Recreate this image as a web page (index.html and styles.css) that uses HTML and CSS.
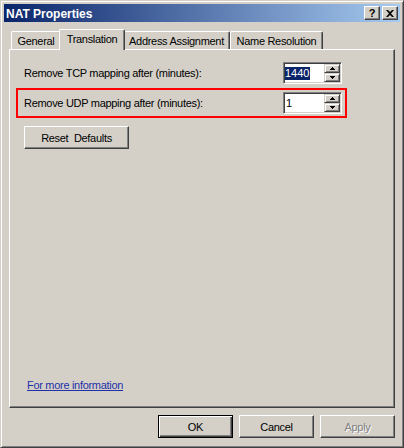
FILE: index.html
```html
<!DOCTYPE html>
<html>
<head>
<meta charset="utf-8">
<link rel="stylesheet" href="styles.css">
</head>
<body>
<div class="window">
  <div class="titlebar">
    <span class="title">NAT Properties</span>
    <div class="tb-buttons">
      <span class="tb-btn">?</span>
      <span class="tb-btn"><svg width="8" height="7" viewBox="0 0 8 7"><path d="M0 0h2l2 2 2-2h2L5 3.5 8 7H6L4 5 2 7H0l3-3.5z" fill="#000"/></svg></span>
    </div>
  </div>
  <div class="body">
    <div class="tabs">
      <div class="tab t-general">General</div>
      <div class="tab t-trans active">Translation</div>
      <div class="tab t-addr">Address Assignment</div>
      <div class="tab t-name">Name Resolution</div>
    </div>
    <div class="panel">
      <div class="row first">
        <span class="label">Remove TCP mapping after (minutes):</span>
        <div class="spin">
          <div class="field"><span class="sel">1440</span></div>
          <div class="spin-btns">
            <span class="sb"><svg width="5" height="3" viewBox="0 0 5 3"><path d="M2 0h1v1h1v1h1v1H0V2h1V1h1z" fill="#000"/></svg></span>
            <span class="sb"><svg width="5" height="3" viewBox="0 0 5 3"><path d="M0 0h5v1H4v1H3v1H2V2H1V1H0z" fill="#000"/></svg></span>
          </div>
        </div>
      </div>
      <div class="udp-box">
        <div class="row">
          <span class="label">Remove UDP mapping after (minutes):</span>
          <div class="spin">
            <div class="field"><span class="val">1</span></div>
            <div class="spin-btns">
              <span class="sb"><svg width="5" height="3" viewBox="0 0 5 3"><path d="M2 0h1v1h1v1h1v1H0V2h1V1h1z" fill="#000"/></svg></span>
              <span class="sb"><svg width="5" height="3" viewBox="0 0 5 3"><path d="M0 0h5v1H4v1H3v1H2V2H1V1H0z" fill="#000"/></svg></span>
            </div>
          </div>
        </div>
      </div>
      <button class="btn reset">Reset&nbsp;&nbsp;Defaults</button>
      <a class="more">For more information</a>
    </div>
    <div class="actions">
      <button class="btn default">OK</button>
      <button class="btn">Cancel</button>
      <button class="btn disabled">Apply</button>
    </div>
  </div>
</div>
</body>
</html>
```

FILE: styles.css
```css
html, body {
  margin: 0;
  padding: 0;
  background: #D4D0C8;
}
body {
  font-family: "Liberation Sans", Arial, sans-serif;
  font-size: 11px;
  letter-spacing: -0.3px;
  color: #000;
}
.window {
  width: 404px;
  height: 448px;
  box-sizing: border-box;
  border: 1px solid;
  border-color: #D4D0C8 #404040 #404040 #D4D0C8;
  box-shadow: inset 1px 1px #fff, inset -1px -1px #808080;
  padding: 3px;
  display: flex;
  flex-direction: column;
  background: #D4D0C8;
}
.titlebar {
  height: 18px;
  flex: none;
  background: linear-gradient(to right, #0A246A, #A6CAF0);
  display: flex;
  align-items: center;
  justify-content: space-between;
  padding: 0 2px 0 2px;
}
.title {
  color: #fff;
  font-weight: bold;
  font-size: 12px;
  letter-spacing: 0;
  padding-top: 1px;
}
.tb-buttons {
  display: flex;
  gap: 2px;
}
.tb-btn {
  width: 16px;
  height: 14px;
  box-sizing: border-box;
  background: #D4D0C8;
  border: 1px solid;
  border-color: #fff #404040 #404040 #fff;
  box-shadow: inset -1px -1px #808080;
  display: flex;
  align-items: center;
  justify-content: center;
  font-weight: bold;
  font-size: 11px;
  letter-spacing: 0;
  line-height: 1;
}
.body {
  flex: 1;
  display: flex;
  flex-direction: column;
  padding: 7px 5px 0;
  min-height: 0;
}
.tabs {
  display: flex;
  align-items: flex-end;
  height: 20px;
  flex: none;
  padding-left: 2px;
  position: relative;
  z-index: 1;
}
.tab {
  height: 18px;
  box-sizing: border-box;
  border-top: 1px solid #fff;
  border-left: 1px solid #fff;
  border-right: 1px solid #404040;
  box-shadow: inset -1px 0 #808080;
  border-radius: 2px 2px 0 0;
  display: flex;
  align-items: center;
  justify-content: center;
  background: #D4D0C8;
  white-space: nowrap;
}
.t-general { width: 50px; }
.t-trans { width: 66px; }
.t-addr { width: 107px; }
.t-name { width: 93px; }
.tab.active {
  height: 21px;
  margin: 0 -2px -1px;
  position: relative;
  z-index: 2;
  padding-bottom: 3px;
}
.panel {
  flex: 1;
  display: flex;
  flex-direction: column;
  align-items: flex-start;
  border: 1px solid;
  border-color: #fff #404040 #404040 #fff;
  box-shadow: inset -1px -1px #808080;
  padding: 12px 0 15px 6px;
}
.row {
  display: flex;
  align-items: center;
  justify-content: space-between;
  width: 318px;
  height: 22px;
}
.row.first {
  margin-left: 8px;
}
.label {
  line-height: 13px;
}
.udp-box {
  margin-top: 4px;
  border: 2px solid #ff0000;
  padding: 2px 3px 2px 6px;
}
.spin {
  width: 59px;
  height: 22px;
  box-sizing: border-box;
  border: 1px solid;
  border-color: #808080 #fff #fff #808080;
  box-shadow: inset 1px 1px #404040, inset -1px -1px #D4D0C8;
  background: #fff;
  display: flex;
  padding: 1px;
}
.field {
  flex: 1;
  display: flex;
  align-items: center;
}
.sel {
  background: #0A246A;
  color: #fff;
  line-height: 13px;
  padding: 0 1px 0 0;
  letter-spacing: 0;
}
.val {
  line-height: 13px;
  padding-left: 1px;
}
.spin-btns {
  width: 16px;
  display: flex;
  flex-direction: column;
}
.sb {
  flex: 1;
  box-sizing: border-box;
  background: #D4D0C8;
  border: 1px solid;
  border-color: #D4D0C8 #404040 #404040 #D4D0C8;
  box-shadow: inset 1px 1px #fff, inset -1px -1px #808080;
  display: flex;
  align-items: center;
  justify-content: center;
}
.sb svg {
  display: block;
}
.btn {
  font: inherit;
  letter-spacing: inherit;
  width: 75px;
  height: 23px;
  box-sizing: border-box;
  background: #D4D0C8;
  border: 1px solid;
  border-color: #fff #404040 #404040 #fff;
  box-shadow: inset -1px -1px #808080;
  padding: 0;
  color: #000;
}
.btn.reset {
  width: 105px;
  margin: 8px 0 0 8px;
}
.btn.default {
  border-color: #000;
  box-shadow: inset 1px 1px #fff, inset -1px -1px #404040, inset -2px -2px #808080;
}
.btn.disabled {
  color: #808080;
  text-shadow: 1px 1px #fff;
}
.more {
  margin-top: auto;
  margin-left: 11px;
  color: #1f30a8;
  text-decoration: underline;
  line-height: 13px;
}
.actions {
  height: 36px;
  flex: none;
  box-sizing: border-box;
  padding-top: 7px;
  display: flex;
  justify-content: flex-end;
  align-items: flex-start;
  gap: 6px;
}
```
